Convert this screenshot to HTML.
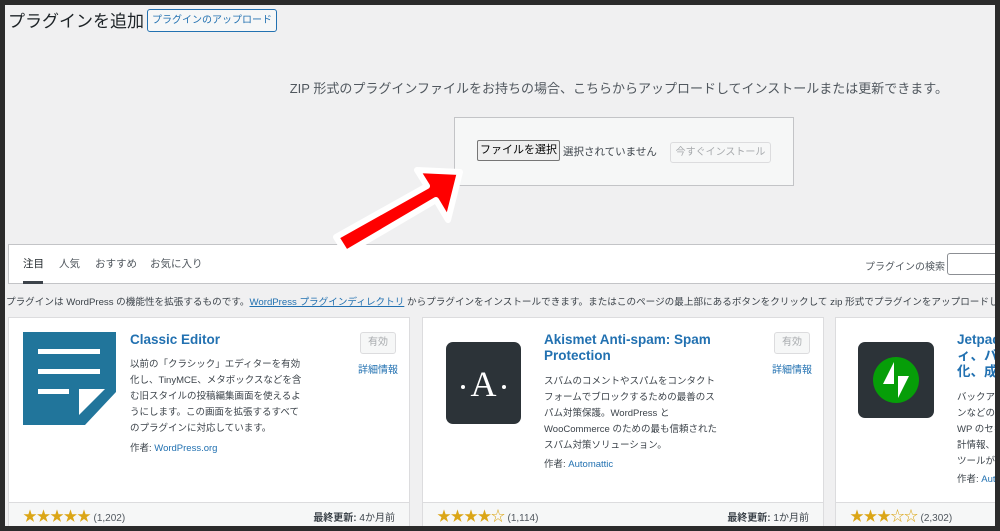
<!DOCTYPE html>
<html><head><meta charset="utf-8"><style>
*{box-sizing:border-box;margin:0;padding:0}
body{width:1000px;height:531px;overflow:hidden;background:#2b2b2b;font-family:"Liberation Sans","Noto Sans CJK JP",sans-serif;color:#3c434a;position:relative}
#page{position:absolute;left:5px;top:5px;width:990px;height:521px;background:#f0f0f1;overflow:hidden}
.a{position:absolute;white-space:nowrap}
.btn{position:absolute;border:1px solid #2271b1;color:#2271b1;border-radius:3px;background:#f6f7f7;font-size:10px;text-align:center;white-space:nowrap}
.card{position:absolute;top:312px;height:230px;background:#fff;border:1px solid #dcdcde}
.card .foot{position:absolute;left:0;right:0;top:184px;bottom:0;background:#f6f7f7;border-top:1px solid #dcdcde}
.title{position:absolute;left:121px;top:14px;font-size:13.5px;font-weight:bold;color:#2271b1;line-height:16px;width:190px}
.desc{position:absolute;left:121px;top:39px;font-size:9.5px;line-height:16px;width:173px;color:#3c434a}
.auth{position:absolute;left:121px;font-size:9.5px;color:#3c434a}
.auth span{color:#2271b1}
.act{position:absolute;left:351px;top:14px;width:36px;height:22px;border:1px solid #dcdcde;border-radius:3px;color:#a7aaad;font-size:10px;text-align:center;line-height:20px;background:#f6f7f7}
.more{position:absolute;left:349px;top:43px;font-size:10px;color:#2271b1}
.stars{position:absolute;left:14px;top:5px;color:#dba617;font-size:14px;line-height:16px;letter-spacing:-0.5px;white-space:nowrap}
.stars small{color:#50575e;font-size:10px;letter-spacing:0;margin-left:3px}
.upd{position:absolute;right:14px;top:6px;font-size:10px;color:#3c434a;white-space:nowrap}
</style></head><body>
<div id="page">
<div class="a" style="left:3px;top:2px;font-size:17px;color:#1d2327">プラグインを追加</div>
<div class="btn" style="left:142px;top:4px;width:130px;height:23px;line-height:21px">プラグインのアップロード</div>
<div class="a" style="right:47px;top:73px;font-size:13px;color:#50575e">ZIP 形式のプラグインファイルをお持ちの場合、こちらからアップロードしてインストールまたは更新できます。</div>
<div class="a" style="left:449px;top:112px;width:340px;height:69px;background:#f6f7f7;border:1px solid #c3c4c7"></div>
<div class="a" style="left:472px;top:135px;width:83px;height:21px;border:1px solid #767676;border-radius:2px;background:#efefef;font-size:11px;color:#000;text-align:center;line-height:19px">ファイルを選択</div>
<div class="a" style="left:558px;top:139px;font-size:10.5px;color:#3c434a">選択されていません</div>
<div class="a" style="left:665px;top:137px;width:101px;height:21px;border:1px solid #dcdcde;border-radius:3px;font-size:10px;color:#a7aaad;text-align:center;line-height:19px;background:#f6f7f7">今すぐインストール</div>

<div class="a" style="left:3px;top:239px;width:990px;height:40px;background:#fff;border:1px solid #c3c4c7"></div>
<div class="a" style="left:18px;top:251px;font-size:10.5px;color:#1d2327">注目</div>
<div class="a" style="left:18px;top:276px;width:20px;height:3px;background:#3c434a"></div>
<div class="a" style="left:54px;top:251px;font-size:10.5px;color:#50575e">人気</div>
<div class="a" style="left:90px;top:251px;font-size:10.5px;color:#50575e">おすすめ</div>
<div class="a" style="left:145px;top:251px;font-size:10.5px;color:#50575e">お気に入り</div>
<div class="a" style="left:860px;top:253px;font-size:10px;color:#50575e">プラグインの検索</div>
<div class="a" style="left:942px;top:248px;width:60px;height:22px;border:1px solid #8c8f94;border-radius:3px;background:#fff"></div>
<div class="a" style="left:1px;top:289px;font-size:9.6px;color:#3c434a">プラグインは WordPress の機能性を拡張するものです。<span style="color:#2271b1;text-decoration:underline">WordPress プラグインディレクトリ</span> からプラグインをインストールできます。またはこのページの最上部にあるボタンをクリックして zip 形式でプラグインをアップロードしてください。</div>

<div class="card" style="left:3px;width:402px">
 <svg class="a" style="left:14px;top:14px" width="93" height="93" viewBox="0 0 93 93"><rect width="93" height="93" fill="#21759b"/><rect x="15" y="17" width="62" height="5" fill="#fff"/><rect x="15" y="37" width="62" height="5" fill="#fff"/><rect x="15" y="57" width="31" height="5" fill="#fff"/><polygon points="56,57 82,57 56,83" fill="#fff"/><polygon points="93,60 93,93 62,93" fill="#fff"/></svg>
 <div class="title">Classic Editor</div>
 <div class="desc">以前の「クラシック」エディターを有効化し、TinyMCE、メタボックスなどを含む旧スタイルの投稿編集画面を使えるようにします。この画面を拡張するすべてのプラグインに対応しています。</div>
 <div class="auth" style="top:122px">作者: <span>WordPress.org</span></div>
 <div class="act">有効</div><div class="more">詳細情報</div>
 <div class="foot"><div class="stars">★★★★★<small>(1,202)</small></div><div class="upd"><b>最終更新:</b> 4か月前</div></div>
</div>

<div class="card" style="left:417px;width:402px">
 <svg class="a" style="left:23px;top:24px" width="75" height="82" viewBox="0 0 75 82"><rect width="75" height="82" rx="7" fill="#2c3338"/><text x="37.5" y="54" text-anchor="middle" fill="#fff" font-family="Liberation Serif,serif" font-size="36">A</text><circle cx="17" cy="45" r="2" fill="#fff"/><circle cx="58" cy="45" r="2" fill="#fff"/></svg>
 <div class="title">Akismet Anti-spam: Spam Protection</div>
 <div class="desc" style="top:56px">スパムのコメントやスパムをコンタクトフォームでブロックするための最善のスパム対策保護。WordPress と WooCommerce のための最も信頼されたスパム対策ソリューション。</div>
 <div class="auth" style="top:138px">作者: <span>Automattic</span></div>
 <div class="act">有効</div><div class="more">詳細情報</div>
 <div class="foot"><div class="stars">★★★★☆<small>(1,114)</small></div><div class="upd"><b>最終更新:</b> 1か月前</div></div>
</div>

<div class="card" style="left:830px;width:402px">
 <svg class="a" style="left:22px;top:24px" width="76" height="76" viewBox="0 0 76 76"><rect width="76" height="76" rx="7" fill="#2c3338"/><circle cx="38" cy="38" r="23" fill="#069e08"/><polygon points="36,20 36,42 25,42" fill="#fff"/><polygon points="40,56 40,34 51,34" fill="#fff"/></svg>
 <div class="title" style="width:250px;white-space:nowrap">Jetpack – WP セキュリテ<br>ィ、バックアップ、高速<br>化、成長</div>
 <div class="desc" style="top:72px;width:250px;white-space:nowrap">バックアップ、マルウェアスキャ<br>ンなどの機能を備えた<br>WP のセキュリティ、統<br>計情報、サイト高速化<br>ツールが</div>
 <div class="auth" style="top:153px">作者: <span>Automattic</span></div>
 <div class="foot"><div class="stars">★★★☆☆<small>(2,302)</small></div></div>
</div>
</div>
<svg class="a" style="left:0;top:0" width="1000" height="531"><polygon points="336,237 427,186 417,170 460,172 448,220 436,200 346,253" fill="#f00" stroke="#fff" stroke-width="6" stroke-linejoin="round"/></svg>
</body></html>
